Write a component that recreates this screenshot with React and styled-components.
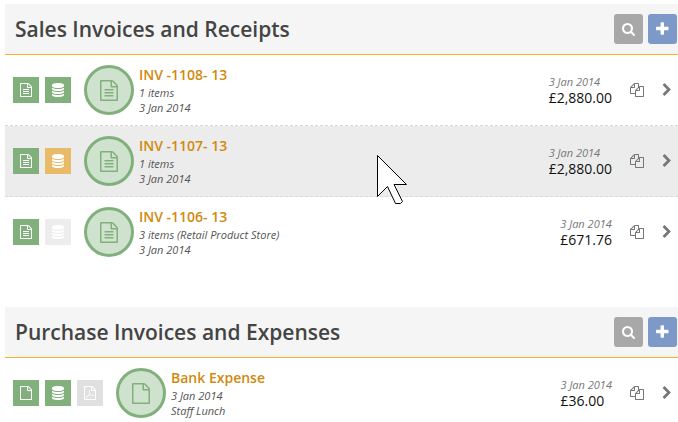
import React from "react";
import styled, { createGlobalStyle } from "styled-components";

const FILE =
  "M1468 380q28 28 48 76t20 88v1152q0 40-28 68t-68 28h-1344q-40 0-68-28t-28-68v-1600q0-40 28-68t68-28h896q40 0 88 20t76 48zM1024 136v376h376q-10-29-22-41l-313-313q-12-12-41-22zM1408 1664v-1024h-416q-40 0-68-28t-28-68v-416h-768v1536h1280z";

const DISK =
  "q237 0 443-43t325-127v170q0 69-103 128t-280 93.5-385 34.5-385-34.5-280-93.5-103-128v-170q119 84 325 127t443 43z";

const LINE =
  "q14 0 23 9t9 23v64q0 14-9 23t-23 9h-704q-14 0-23-9t-9-23v-64q0-14 9-23t23-9h704z";

const icons = {
  file: { width: 1536, path: FILE },
  fileText: {
    width: 1536,
    path: `${FILE}M1120 768${LINE}M1120 1024${LINE}M1120 1280${LINE}`,
  },
  filePdf: {
    width: 1536,
    path: `${FILE}M894 1071q33 26 84 56 59-7 117-7 147 0 177 49 16 22 2 52 0 1-1 2l-2 2v1q-6 38-71 38-48 0-115-20t-130-53q-221 24-392 83-153 262-242 262-15 0-28-7l-24-12q-1-1-6-5-10-10-6-36 9-40 56-91.5t132-96.5q14-9 23 6 2 2 2 4 52-85 107-197 68-136 104-262-24-82-30.5-159.5t6.5-127.5q11-40 42-40h22q23 0 35 15 18 21 9 68-2 6-4 8 1 3 1 8v30q-2 123-14 192 55 164 146 238zM318 1482q52-24 137-158-51 40-87.5 84t-49.5 74zM592 1223q135-54 284-81-2-1-13-9.5t-16-13.5q-76-67-127-176-27 86-83 197-30 56-45 83zM1238 1207q-24-24-140-24 76 28 124 28 14 0 18-1 0-1-2-3z`,
  },
  database: {
    width: 1536,
    path: `M768 768${DISK}M768 1536${DISK}M768 1152${DISK}M768 0q208 0 385 34.5t280 93.5 103 128v128q0 69-103 128t-280 93.5-385 34.5-385-34.5-280-93.5-103-128v-128q0-69 103-128t280-93.5 385-34.5z`,
  },
  search: {
    width: 1664,
    path: "M1152 832q0-185-131.5-316.5t-316.5-131.5-316.5 131.5-131.5 316.5 131.5 316.5 316.5 131.5 316.5-131.5 131.5-316.5zM1664 1664q0 52-38 90t-90 38q-54 0-90-38l-343-342q-179 124-399 124-143 0-273.5-55.5t-225-150-150-225-55.5-273.5 55.5-273.5 150-225 225-150 273.5-55.5 273.5 55.5 225 150 150 225 55.5 273.5q0 220-124 399l343 343q37 37 37 90z",
  },
  plus: {
    width: 1408,
    path: "M1408 736v192q0 40-28 68t-68 28h-416v416q0 40-28 68t-68 28h-192q-40 0-68-28t-28-68v-416h-416q-40 0-68-28t-28-68v-192q0-40 28-68t68-28h416v-416q0-40 28-68t68-28h192q40 0 68 28t28 68v416h416q40 0 68 28t28 68z",
  },
  copy: {
    width: 1792,
    path: "M1696 384q40 0 68 28t28 68v1216q0 40-28 68t-68 28h-960q-40 0-68-28t-28-68v-288h-544q-40 0-68-28t-28-68v-672q0-40 20-88t48-76l408-408q28-28 76-48t88-20h416q40 0 68 28t28 68v328q68-40 128-40h416zM1152 597l-299 299h299v-299zM512 213l-299 299h299v-299zM708 860l316-316v-416h-384v416q0 40-28 68t-68 28h-416v640h512v-256q0-40 20-88t48-76zM1664 1664v-1152h-384v416q0 40-28 68t-68 28h-416v640h896z",
  },
  chevron: {
    width: 1280,
    path: "M1107 877l-742 742q-19 19-45 19t-45-19l-166-166q-19-19-19-45t19-45l531-531-531-531q-19-19-19-45t19-45l166-166q19-19 45-19t45 19l742 742q19 19 19 45t-19 45z",
  },
};

function Icon({ name, size }) {
  const { width, path } = icons[name];
  return (
    <IconSvg viewBox={`0 0 ${width} 1792`} height={size} aria-hidden="true">
      <path d={path} />
    </IconSvg>
  );
}

const sales = [
  {
    name: "INV -1108- 13",
    lines: ["1 items", "3 Jan 2014"],
    date: "3 Jan 2014",
    amount: "£2,880.00",
    icon: "fileText",
    badges: [["fileText", "#82b07c"], ["database", "#82b07c"]],
  },
  {
    name: "INV -1107- 13",
    lines: ["1 items", "3 Jan 2014"],
    date: "3 Jan 2014",
    amount: "£2,880.00",
    icon: "fileText",
    badges: [["fileText", "#82b07c"], ["database", "#e7bb68"]],
    active: true,
  },
  {
    name: "INV -1106- 13",
    lines: ["3 items (Retail Product Store)", "3 Jan 2014"],
    date: "3 Jan 2014",
    amount: "£671.76",
    icon: "fileText",
    badges: [["fileText", "#82b07c"], ["database", "#ededed"]],
  },
];

const purchases = [
  {
    name: "Bank Expense",
    lines: ["3 Jan 2014", "Staff Lunch"],
    date: "3 Jan 2014",
    amount: "£36.00",
    icon: "file",
    badges: [["file", "#82b07c"], ["database", "#82b07c"], ["filePdf", "#e0e0e0"]],
  },
];

function Panel({ title, items }) {
  return (
    <Section>
      <Header>
        <Title>{title}</Title>
        <HeaderButton type="button" aria-label="Search" $color="#a8a8a8">
          <Icon name="search" size={14} />
        </HeaderButton>
        <HeaderButton type="button" aria-label="Add" $color="#7d99c8">
          <Icon name="plus" size={16} />
        </HeaderButton>
      </Header>
      <List>
        {items.map((item) => (
          <Row key={item.name} $active={item.active}>
            <Badges>
              {item.badges.map(([icon, color]) => (
                <Badge key={icon} $color={color}>
                  <Icon name={icon} size={14} />
                </Badge>
              ))}
            </Badges>
            <Circle>
              <Icon name={item.icon} size={21} />
            </Circle>
            <Details>
              <Name href="#">{item.name}</Name>
              {item.lines.map((line) => (
                <Meta key={line}>{line}</Meta>
              ))}
            </Details>
            <Total>
              <Meta $light>{item.date}</Meta>
              <Amount>{item.amount}</Amount>
            </Total>
            <CopyButton type="button" aria-label="Copy">
              <Icon name="copy" size={14} />
            </CopyButton>
            <OpenButton type="button" aria-label="Open">
              <Icon name="chevron" size={14} />
            </OpenButton>
          </Row>
        ))}
      </List>
    </Section>
  );
}

function App() {
  return (
    <Page>
      <GlobalStyle />
      <Panel title="Sales Invoices and Receipts" items={sales} />
      <Panel title="Purchase Invoices and Expenses" items={purchases} />
      <Pointer viewBox="0 0 31 50" width="31" height="50" aria-hidden="true">
        <path d="M.5.5V41.5L10.5 31.5 18.5 48.5H23.5L25.5 46.5 17 29.5H29.5Z" />
      </Pointer>
    </Page>
  );
}

const GlobalStyle = createGlobalStyle`
  * {
    box-sizing: border-box;
  }
  body {
    margin: 0;
    background: #fff;
    font-family: "Open Sans", "Noto Sans", sans-serif;
  }
`;
const IconSvg = styled.svg`
  display: block;
  fill: currentColor;
`;
const Page = styled.main`
  position: relative;
  padding: 4px 0 0 5px;
`;
const Section = styled.section`
  & + & {
    margin-top: 50px;
  }
`;
const Header = styled.header`
  display: flex;
  align-items: center;
  gap: 5px;
  padding: 10px 1px 10px 10px;
  background: #f5f5f5;
  border-bottom: 1px solid #f5b32f;
`;
const Title = styled.h2`
  flex: 1;
  margin: 0;
  color: #444;
  font-size: 21px;
  font-weight: 600;
  line-height: 30px;
`;
const HeaderButton = styled.button`
  display: flex;
  align-items: center;
  justify-content: center;
  width: 29px;
  height: 30px;
  padding: 0;
  border: 0;
  border-radius: 3px;
  color: #fff;
  background: ${(props) => props.$color};
`;
const List = styled.ul`
  margin: 0;
  padding: 0;
  list-style: none;
`;
const Row = styled.li`
  display: flex;
  align-items: center;
  padding: 10px 6px 10px 8px;
  background: ${(props) => (props.$active ? "#ececec" : "#fff")};
  border-bottom: 1px dashed #d9d9d9;

  &:last-child {
    padding-bottom: 0;
    border-bottom: 0;
  }
`;
const Badges = styled.div`
  display: flex;
  gap: 6px;
  margin-right: 13px;
`;
const Badge = styled.span`
  display: flex;
  align-items: center;
  justify-content: center;
  width: 26px;
  height: 26px;
  color: #fff;
  background: ${(props) => props.$color};
`;
const Circle = styled.div`
  display: flex;
  align-items: center;
  justify-content: center;
  width: 50px;
  height: 50px;
  border: 3px solid #82b07c;
  border-radius: 50%;
  color: #82b07c;
  background: #cfe2ce;
`;
const Details = styled.div`
  flex: 1;
  margin-left: 5px;
`;
const Name = styled.a`
  display: block;
  color: #d08a0e;
  font-size: 14px;
  font-weight: 600;
  line-height: 20px;
  text-decoration: none;
`;
const Meta = styled.div`
  color: ${(props) => (props.$light ? "#777" : "#555")};
  font-size: 11px;
  font-style: italic;
  line-height: 15px;
`;
const Total = styled.div`
  margin-right: 18px;
`;
const Amount = styled.div`
  color: #111;
  font-size: 14px;
  line-height: 18px;
`;
const CopyButton = styled.button`
  margin-right: 18px;
  padding: 0;
  border: 0;
  color: #777;
  background: none;
`;
const OpenButton = styled(CopyButton)`
  margin-right: 0;
`;
const Pointer = styled.svg`
  position: absolute;
  top: 155px;
  left: 377px;
  fill: #fff;
  stroke: #000;
  pointer-events: none;
`;

export default App;
